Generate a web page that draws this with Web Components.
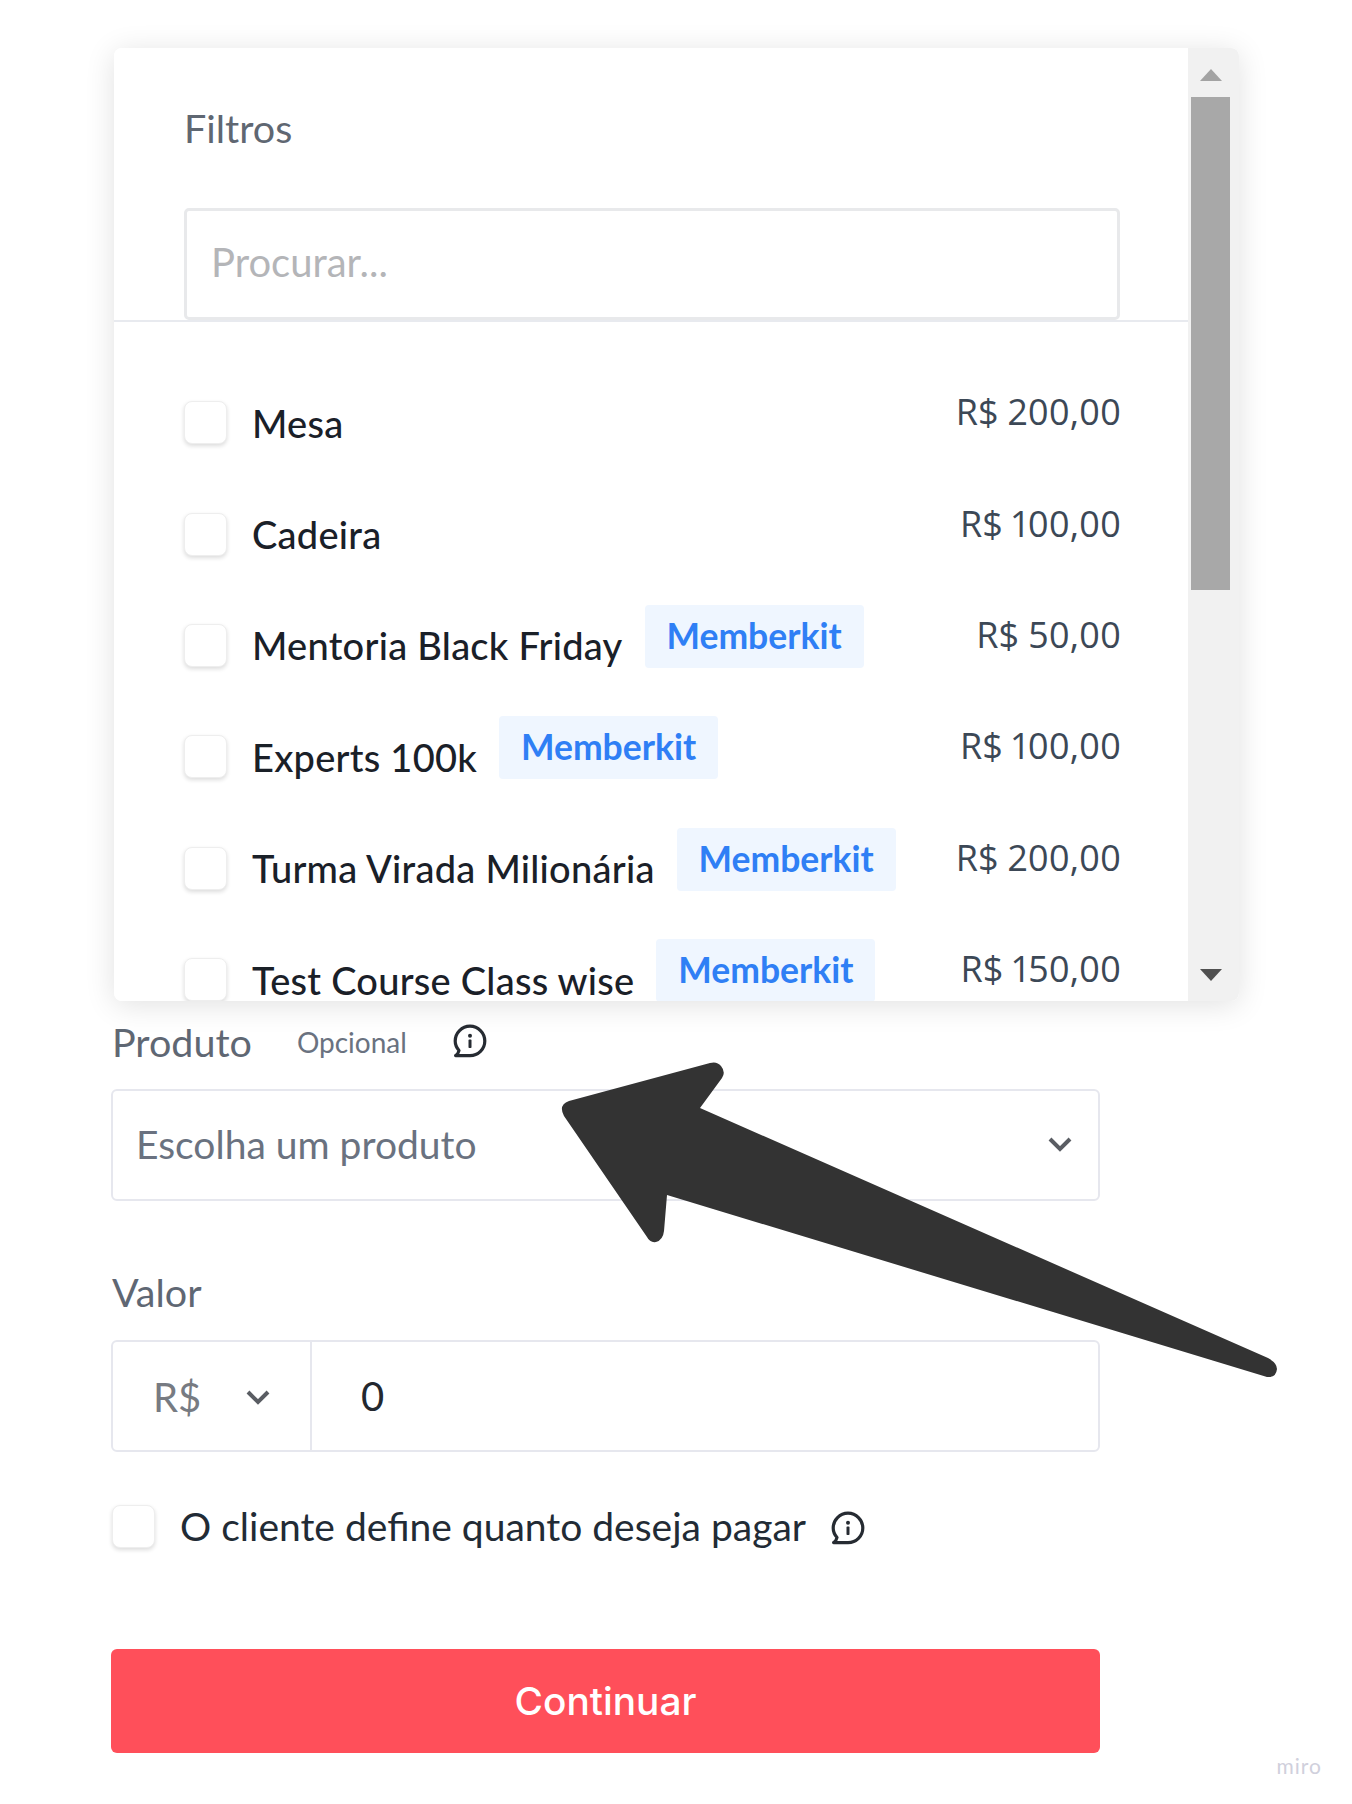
<!DOCTYPE html>
<html lang="pt-BR">
<head>
<meta charset="utf-8">
<title>Produto</title>
<style>
  html, body { margin: 0; padding: 0; background: #fff; }
  body { font-family: Lato, "Open Sans", sans-serif; }
</style>
</head>
<body>
<checkout-page>
  <filter-panel slot="panel" title-text="Filtros" placeholder="Procurar...">
    <filter-row price="R$ 200,00">Mesa</filter-row>
    <filter-row price="R$ 100,00">Cadeira</filter-row>
    <filter-row price="R$ 50,00" tag="Memberkit">Mentoria Black Friday</filter-row>
    <filter-row price="R$ 100,00" tag="Memberkit">Experts 100k</filter-row>
    <filter-row price="R$ 200,00" tag="Memberkit">Turma Virada Milionária</filter-row>
    <filter-row price="R$ 150,00" tag="Memberkit">Test Course Class wise</filter-row>
  </filter-panel>
  <product-form slot="form"></product-form>
</checkout-page>

<script>
class CheckBox extends HTMLElement {
  constructor() {
    super();
    this.attachShadow({ mode: "open" });
  }
  connectedCallback() {
    this.shadowRoot.innerHTML = `
      <style>
        :host {
          display: block;
          flex: none;
          box-sizing: border-box;
          width: 43px;
          height: 43px;
          background: #fff;
          border: 1px solid #eeeeee;
          border-radius: 8px;
          box-shadow: 0 2px 4px rgba(0, 0, 0, 0.14);
        }
      </style>
    `;
  }
}
customElements.define("check-box", CheckBox);

class InfoIcon extends HTMLElement {
  constructor() {
    super();
    this.attachShadow({ mode: "open" });
  }
  connectedCallback() {
    var size = this.getAttribute("size") || 34;
    this.shadowRoot.innerHTML = `
      <style>
        :host { display: block; flex: none; line-height: 0; }
      </style>
      <svg width="${size}" height="${size}" viewBox="0 0 34 34" fill="none">
        <path d="M6 26.5C3.6 23.8 2.2 20.7 2.2 17 2.2 8.8 8.8 2.2 17 2.2S31.8 8.8 31.8 17 25.2 31.6 17 31.6H2.6C4.4 30.4 5.6 28.6 6 26.5Z"
          stroke="#262b32" stroke-width="3.2" stroke-linejoin="round"/>
        <circle cx="17" cy="11.8" r="2" fill="#262b32"/>
        <rect x="15.5" y="15.6" width="3" height="8.4" rx="0.8" fill="#262b32"/>
      </svg>
    `;
  }
}
customElements.define("info-icon", InfoIcon);

class ChevronIcon extends HTMLElement {
  constructor() {
    super();
    this.attachShadow({ mode: "open" });
  }
  connectedCallback() {
    this.shadowRoot.innerHTML = `
      <style>
        :host { display: block; flex: none; line-height: 0; }
      </style>
      <svg width="26" height="16" viewBox="0 0 26 16" fill="none">
        <path d="M3 3L13 13L23 3" stroke="#5a5d63" stroke-width="4"/>
      </svg>
    `;
  }
}
customElements.define("chevron-icon", ChevronIcon);

class TagBadge extends HTMLElement {
  constructor() {
    super();
    this.attachShadow({ mode: "open" });
  }
  connectedCallback() {
    this.shadowRoot.innerHTML = `
      <style>
        :host {
          display: block;
          flex: none;
          box-sizing: border-box;
          width: 219px;
          height: 63px;
          line-height: 62px;
          text-align: center;
          border-radius: 4px;
          background: #eff6ff;
          color: #2f7ff5;
          font-family: Lato, sans-serif;
          font-weight: 700;
          font-size: 35.5px;
        }
      </style>
      <slot></slot>
    `;
  }
}
customElements.define("tag-badge", TagBadge);

class FilterRow extends HTMLElement {
  constructor() {
    super();
    this.attachShadow({ mode: "open" });
  }
  connectedCallback() {
    var tag = this.getAttribute("tag");
    var price = this.getAttribute("price");
    this.shadowRoot.innerHTML = `
      <style>
        :host {
          display: flex;
          align-items: center;
          height: 111.4px;
        }
        .name {
          margin-left: 25px;
          font-size: 38px;
          font-weight: 500;
          color: #1a2028;
          white-space: nowrap;
          letter-spacing: 0.25px;
        }
        tag-badge { margin: 0 0 18px 22px; }
        .price {
          margin: 0 -1px 22px auto;
          font-family: "Open Sans", sans-serif;
          font-size: 36px;
          font-variant-numeric: proportional-nums;
          color: #3c4856;
          white-space: nowrap;
        }
      </style>
      <check-box></check-box>
      <span class="name"><slot></slot></span>
      ${tag ? `<tag-badge>${tag}</tag-badge>` : ""}
      <span class="price">${price}</span>
    `;
  }
}
customElements.define("filter-row", FilterRow);

class FilterScrollbar extends HTMLElement {
  constructor() {
    super();
    this.attachShadow({ mode: "open" });
  }
  connectedCallback() {
    this.shadowRoot.innerHTML = `
      <style>
        :host {
          display: flex;
          flex-direction: column;
          align-items: center;
          flex: none;
          box-sizing: border-box;
          width: 51px;
          height: 100%;
          padding-right: 6px;
          background: #f1f1f1;
        }
        .up, .down { flex: none; width: 0; height: 0; border-left: 11px solid transparent; border-right: 11px solid transparent; }
        .up { margin-top: 21px; border-bottom: 12px solid #a3a3a3; }
        .thumb { flex: none; width: 39px; height: 493px; margin-top: 16px; background: #a8a8a8; }
        .down { margin-top: auto; margin-bottom: 20px; border-top: 12px solid #505050; }
      </style>
      <div class="up"></div>
      <div class="thumb"></div>
      <div class="down"></div>
    `;
  }
}
customElements.define("filter-scrollbar", FilterScrollbar);

class FilterPanel extends HTMLElement {
  constructor() {
    super();
    this.attachShadow({ mode: "open" });
  }
  connectedCallback() {
    var title = this.getAttribute("title-text");
    var placeholder = this.getAttribute("placeholder");
    this.shadowRoot.innerHTML = `
      <style>
        :host {
          display: flex;
          box-sizing: border-box;
          width: 1125px;
          height: 953px;
          background: #fff;
          border-radius: 8px;
          overflow: hidden;
        }
        .main { flex: 1; min-width: 0; display: flex; flex-direction: column; }
        .head {
          flex: none;
          box-sizing: border-box;
          height: 274px;
          padding: 56px 68px 0 70px;
          border-bottom: 2px solid #e8eaef;
        }
        h2 {
          margin: 0 0 56px;
          font-size: 39.5px;
          line-height: 48px;
          font-weight: 400;
          color: #5f6772;
        }
        .search {
          box-sizing: border-box;
          height: 112px;
          padding-left: 24px;
          line-height: 102px;
          border: 3px solid #e8e9eb;
          border-radius: 5px;
          font-size: 40px;
          color: #b4b5b8;
        }
        .list {
          flex: 1;
          min-height: 0;
          overflow: hidden;
          padding: 45px 68px 0 70px;
        }
      </style>
      <div class="main">
        <div class="head">
          <h2>${title}</h2>
          <div class="search">${placeholder}</div>
        </div>
        <div class="list"><slot></slot></div>
      </div>
      <filter-scrollbar></filter-scrollbar>
    `;
  }
}
customElements.define("filter-panel", FilterPanel);

class SelectField extends HTMLElement {
  constructor() {
    super();
    this.attachShadow({ mode: "open" });
  }
  connectedCallback() {
    this.shadowRoot.innerHTML = `
      <style>
        :host {
          display: flex;
          align-items: center;
          justify-content: space-between;
          box-sizing: border-box;
          height: 112px;
          padding: 0 25px 2px 23px;
          border: 2px solid #e6e7ee;
          border-radius: 6px;
          font-size: 39px;
          color: #6a7280;
        }
      </style>
      <slot></slot>
      <chevron-icon></chevron-icon>
    `;
  }
}
customElements.define("select-field", SelectField);

class MoneyField extends HTMLElement {
  constructor() {
    super();
    this.attachShadow({ mode: "open" });
  }
  connectedCallback() {
    this.shadowRoot.innerHTML = `
      <style>
        :host {
          display: flex;
          box-sizing: border-box;
          height: 112px;
          border: 2px solid #e6e7ee;
          border-radius: 6px;
          font-size: 40px;
        }
        .currency {
          flex: none;
          box-sizing: border-box;
          width: 199px;
          display: flex;
          align-items: center;
          gap: 44px;
          padding: 2px 0 0 40px;
          border-right: 2px solid #e6e7ee;
          color: #777b82;
        }
        .value {
          flex: 1;
          padding-left: 49px;
          line-height: 108px;
          color: #23282f;
        }
      </style>
      <div class="currency">
        <span>R$</span>
        <chevron-icon></chevron-icon>
      </div>
      <div class="value"><slot></slot></div>
    `;
  }
}
customElements.define("money-field", MoneyField);

class ActionButton extends HTMLElement {
  constructor() {
    super();
    this.attachShadow({ mode: "open" });
  }
  connectedCallback() {
    this.shadowRoot.innerHTML = `
      <style>
        :host {
          display: block;
          height: 104px;
          line-height: 104px;
          text-align: center;
          border-radius: 6px;
          background: #ff4f5a;
          color: #fff;
          font-family: Inter, sans-serif;
          font-weight: 500;
          font-size: 38.8px;
        }
      </style>
      <slot></slot>
    `;
  }
}
customElements.define("action-button", ActionButton);

class ProductForm extends HTMLElement {
  constructor() {
    super();
    this.attachShadow({ mode: "open" });
  }
  connectedCallback() {
    this.shadowRoot.innerHTML = `
      <style>
        :host {
          display: block;
          box-sizing: border-box;
          width: 989px;
          font-size: 39.5px;
        }
        .label-row {
          display: flex;
          align-items: center;
          height: 64px;
          margin-bottom: 15px;
          padding-bottom: 2px;
          box-sizing: border-box;
        }
        .label { color: #5f6773; margin-left: 1px; }
        .optional { margin-left: 45px; font-size: 28px; color: #6a7280; margin-top: 2px; }
        info-icon { margin-left: 46px; }
        .valor { margin-top: 59px; margin-bottom: 16px; height: 64px; line-height: 64px; }
        .check-row {
          display: flex;
          align-items: center;
          margin-top: 52px;
          padding-left: 1px;
          height: 44px;
          font-size: 39px;
          color: #222b35;
        }
        .check-row span { margin-left: 25px; white-space: nowrap; }
        .check-row info-icon { margin: 3px 0 0 25px; }
        action-button { margin-top: 101px; }
      </style>
      <div class="label-row">
        <span class="label">Produto</span>
        <span class="optional">Opcional</span>
        <info-icon></info-icon>
      </div>
      <select-field>Escolha um produto</select-field>
      <div class="label valor">Valor</div>
      <money-field>0</money-field>
      <div class="check-row">
        <check-box></check-box>
        <span>O cliente define quanto deseja pagar</span>
        <info-icon></info-icon>
      </div>
      <action-button>Continuar</action-button>
    `;
  }
}
customElements.define("product-form", ProductForm);

class NoteArrow extends HTMLElement {
  constructor() {
    super();
    this.attachShadow({ mode: "open" });
  }
  connectedCallback() {
    this.shadowRoot.innerHTML = `
      <style>
        :host { position: absolute; left: 0; top: 0; pointer-events: none; line-height: 0; }
      </style>
      <svg width="1352" height="1804" viewBox="0 0 1352 1804">
        <path fill="#333333" d="M569 1101L710 1063Q717 1061 721 1066Q726 1072 722 1078L700 1108
          L1268 1358Q1277 1363 1277 1369Q1276 1378 1267 1377L667 1195L664 1231
          Q663 1240 656 1242Q650 1243 647 1237L564 1116Q558 1105 569 1101Z"/>
      </svg>
    `;
  }
}
customElements.define("note-arrow", NoteArrow);

class MiroMark extends HTMLElement {
  constructor() {
    super();
    this.attachShadow({ mode: "open" });
  }
  connectedCallback() {
    this.shadowRoot.innerHTML = `
      <style>
        :host {
          position: absolute;
          right: 30px;
          bottom: 28px;
          font-family: Lato, sans-serif;
          font-size: 21px;
          line-height: 20px;
          letter-spacing: 1px;
          color: #d0d0dc;
        }
      </style>
      miro
    `;
  }
}
customElements.define("miro-mark", MiroMark);

class CheckoutPage extends HTMLElement {
  constructor() {
    super();
    this.attachShadow({ mode: "open" });
  }
  connectedCallback() {
    this.shadowRoot.innerHTML = `
      <style>
        :host {
          display: block;
          position: relative;
          width: 1352px;
          height: 1804px;
          overflow: hidden;
          background: #fff;
          font-family: Lato, sans-serif;
        }
        .panel-wrap {
          width: 1125px;
          margin-left: 114px;
          padding-top: 48px;
        }
        .shadow { border-radius: 8px; box-shadow: 0 4px 30px rgba(0, 0, 0, 0.12); }
        .form-wrap { margin: 9px 0 0 111px; }
      </style>
      <div class="panel-wrap"><div class="shadow"><slot name="panel"></slot></div></div>
      <div class="form-wrap"><slot name="form"></slot></div>
      <note-arrow></note-arrow>
      <miro-mark></miro-mark>
    `;
  }
}
customElements.define("checkout-page", CheckoutPage);
</script>
</body>
</html>
